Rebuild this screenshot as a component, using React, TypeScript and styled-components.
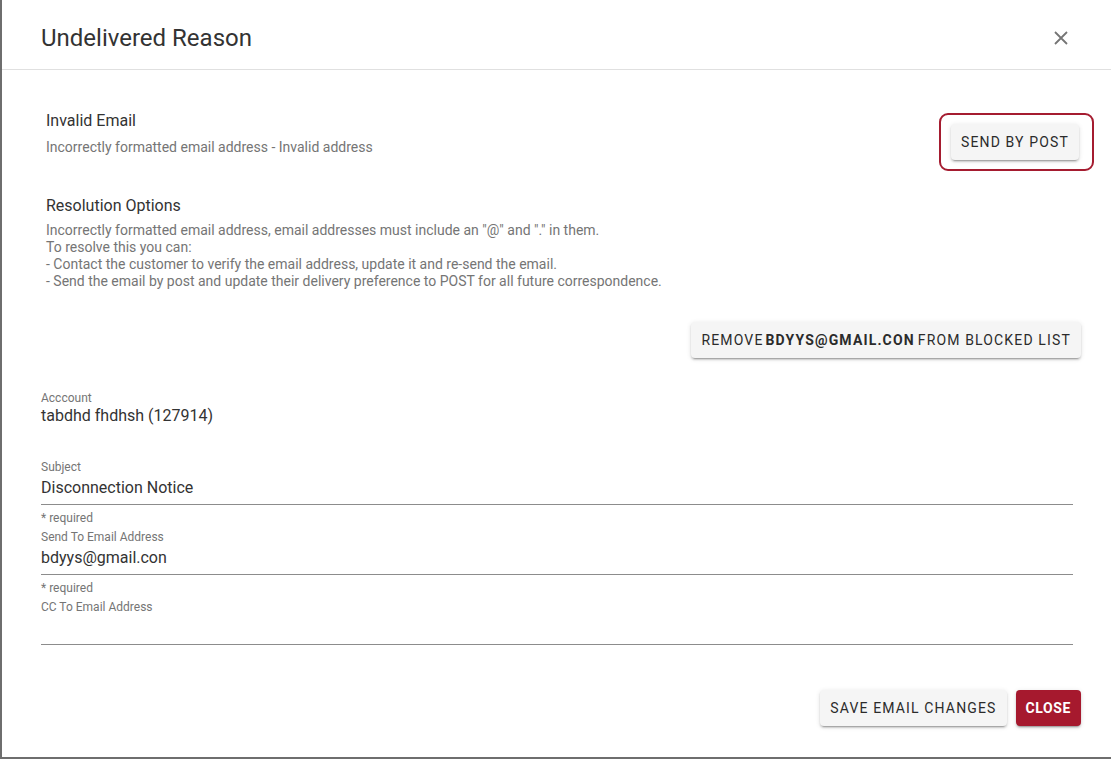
import React from "react";
import styled, { createGlobalStyle } from "styled-components";

const GlobalStyle = createGlobalStyle`
  html, body {
    margin: 0;
    padding: 0;
    background: #6e6e6e;
    font-family: Roboto, "Liberation Sans", Arial, sans-serif;
  }
`;

const Page = styled.div`
  width: 1111px;
  height: 759px;
  padding: 0 0 2px 2px;
  box-sizing: border-box;
  overflow: hidden;
`;

const Dialog = styled.div`
  height: 757px;
  background: #fff;
  display: flex;
  flex-direction: column;
`;

const Header = styled.div`
  height: 70px;
  box-sizing: border-box;
  padding: 6px 43px 0 39px;
  display: flex;
  align-items: center;
  justify-content: space-between;
  border-bottom: 1px solid #e0e0e0;
`;

const Title = styled.h2`
  margin: 0;
  font-size: 24px;
  line-height: 32px;
  font-weight: 400;
  color: #333;
`;

const CloseIcon = styled.button`
  border: 0;
  background: none;
  padding: 0;
  width: 14px;
  height: 14px;
  display: flex;
  cursor: pointer;
`;

const Body = styled.div`
  flex: 1;
  padding: 0 30px 0 39px;
  display: flex;
  flex-direction: column;
`;

const TopRow = styled.div`
  display: flex;
  justify-content: space-between;
  align-items: flex-start;
  margin-top: 41px;
  padding-left: 5px;
`;

const Heading = styled.div`
  font-size: 16px;
  line-height: 20px;
  color: #333;
`;

const Secondary = styled.div<{ $gap?: number }>`
  font-size: 14px;
  line-height: ${(p) => (p.$gap ? 17 : 20)}px;
  color: #757575;
  margin-top: ${(p) => p.$gap ?? 6}px;
`;

const Highlight = styled.div`
  margin-top: 2px;
  margin-right: -13px;
  border: 2px solid #a51c30;
  border-radius: 9px;
  padding: 9px 13px 9px 10px;
`;

const Button = styled.button<{ $primary?: boolean }>`
  height: 36px;
  padding: 0 10px;
  border: 0;
  border-radius: 4px;
  font-family: Roboto, "Liberation Sans", Arial, sans-serif;
  font-size: 14px;
  font-weight: ${(p) => (p.$primary ? 700 : 400)};
  letter-spacing: ${(p) => (p.$primary ? 0.6 : 1.15)}px;
  text-transform: uppercase;
  color: ${(p) => (p.$primary ? "#fff" : "#2b2b2b")};
  background: ${(p) => (p.$primary ? "#a6192e" : "#f5f5f5")};
  box-shadow: 0 3px 1px -2px rgba(0, 0, 0, 0.2), 0 2px 2px 0 rgba(0, 0, 0, 0.14),
    0 1px 5px 0 rgba(0, 0, 0, 0.12);
  cursor: pointer;
  display: inline-flex;
  align-items: center;
  white-space: nowrap;
`;

const Resolution = styled.div`
  padding-left: 5px;
  margin-top: 25px;
`;

const ActionRow = styled.div<{ $top: number }>`
  display: flex;
  justify-content: flex-end;
  gap: 9px;
  margin-top: ${(p) => p.$top}px;
`;

const Email = styled.b`
  font-weight: 700;
  margin: 0 3px 0 2px;
`;

const ReadOnly = styled.div`
  margin-top: 33px;
`;

const Label = styled.div`
  font-size: 12px;
  line-height: 14px;
  color: #757575;
`;

const Value = styled.div`
  font-size: 16px;
  line-height: 20px;
  color: #333;
  margin-top: 1px;
`;

const Field = styled.label<{ $top: number }>`
  display: block;
  margin: ${(p) => p.$top}px 8px 0 0;
`;

const Input = styled.input`
  display: block;
  width: 100%;
  box-sizing: content-box;
  margin: 4px 0 0;
  padding: 0 0 6px;
  border: 0;
  border-bottom: 1px solid #8c8c8c;
  outline: none;
  font-family: Roboto, "Liberation Sans", Arial, sans-serif;
  font-size: 16px;
  line-height: 20px;
  height: 20px;
  color: #333;
  background: transparent;
`;

const Helper = styled.div`
  font-size: 12px;
  line-height: 14px;
  color: #757575;
  margin-top: 6px;
`;

export default function App() {
  return (
    <Page>
      <GlobalStyle />
      <Dialog>
        <Header>
          <Title>Undelivered Reason</Title>
          <CloseIcon aria-label="close">
            <svg width="14" height="14" viewBox="0 0 14 14">
              <path d="M1 1 L13 13 M13 1 L1 13" stroke="#757575" strokeWidth="1.8" />
            </svg>
          </CloseIcon>
        </Header>

        <Body>
          <TopRow>
            <div>
              <Heading>Invalid Email</Heading>
              <Secondary>Incorrectly formatted email address - Invalid address</Secondary>
            </div>
            <Highlight>
              <Button>Send by post</Button>
            </Highlight>
          </TopRow>

          <Resolution>
            <Heading>Resolution Options</Heading>
            <Secondary $gap={6}>
              Incorrectly formatted email address, email addresses must include an "@" and "." in them.
              <br />
              To resolve this you can:
              <br />- Contact the customer to verify the email address, update it and re-send the email.
              <br />- Send the email by post and update their delivery preference to POST for all future
              correspondence.
            </Secondary>
          </Resolution>

          <ActionRow $top={32}>
            <Button>
              Remove<Email>bdyys@gmail.con</Email>from blocked list
            </Button>
          </ActionRow>

          <ReadOnly>
            <Label>Acccount</Label>
            <Value>tabdhd fhdhsh (127914)</Value>
          </ReadOnly>

          <Field $top={34}>
            <Label>Subject</Label>
            <Input defaultValue="Disconnection Notice" />
          </Field>
          <Helper>* required</Helper>
          <Field $top={5}>
            <Label>Send To Email Address</Label>
            <Input defaultValue="bdyys@gmail.con" />
          </Field>
          <Helper>* required</Helper>
          <Field $top={5}>
            <Label>CC To Email Address</Label>
            <Input defaultValue="" />
          </Field>

          <ActionRow $top={45}>
            <Button>Save email changes</Button>
            <Button $primary>Close</Button>
          </ActionRow>
        </Body>
      </Dialog>
    </Page>
  );
}
